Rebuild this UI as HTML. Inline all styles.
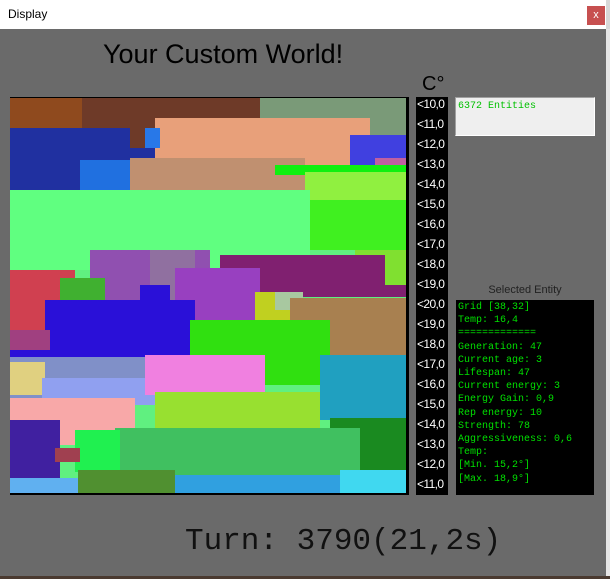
<!DOCTYPE html>
<html><head><meta charset="utf-8"><style>
*{margin:0;padding:0;box-sizing:border-box}
body{width:610px;height:579px;overflow:hidden;background:#d8d8d8;position:relative;font-family:"Liberation Sans",sans-serif}
.abs{position:absolute}
#title{left:0;top:0;width:606px;height:29px;background:#fff}
#body{left:0;top:29px;width:606px;height:547px;background:#6a6a6a}
#bottom{left:0;top:576px;width:610px;height:3px;background:#4a3a30}
.t{position:absolute;left:417px;color:#fff;font-size:12px;letter-spacing:-0.6px;line-height:14px}
.g{font-family:"Liberation Mono",monospace;font-size:10px;color:#00e000;line-height:13.2px;white-space:pre}
</style></head><body>
<div class="abs" id="title"><span class="abs" style="left:8px;top:7px;font-size:12px;color:#000">Display</span>
<div class="abs" style="left:587px;top:6px;width:18px;height:19px;background:#c75050;color:#fff;font-size:11px;text-align:center;line-height:18px">x</div></div>
<div class="abs" id="body"></div>
<div class="abs" style="left:606px;top:29px;width:4px;height:547px;background:#e6e6e6"></div>
<div class="abs" id="bottom"></div>
<div class="abs" style="left:103px;top:39px;font-size:27px;color:#000">Your Custom World!</div>
<div class="abs" style="left:422px;top:73px;font-size:20px;color:#000">C°</div>

<svg class="abs" style="left:10px;top:97px" width="399" height="398" viewBox="10 97 399 398">
<rect x="10" y="97" width="399" height="398" fill="#000"/>
<rect x="10" y="98" width="396" height="395" fill="#60f080"/>
<rect x="10" y="98" width="260" height="30" fill="#6e3a28"/>
<rect x="10" y="98" width="72" height="35" fill="#8f4a1e"/>
<rect x="260" y="98" width="146" height="37" fill="#7a9a78"/>
<rect x="155" y="118" width="215" height="47" fill="#e8a07a"/>
<rect x="10" y="128" width="145" height="62" fill="#2030a0"/>
<rect x="130" y="128" width="25" height="20" fill="#6e3a28"/>
<rect x="80" y="160" width="50" height="30" fill="#2070e0"/>
<rect x="145" y="128" width="15" height="20" fill="#2878e8"/>
<rect x="350" y="135" width="56" height="30" fill="#4040e0"/>
<rect x="130" y="158" width="175" height="45" fill="#c09070"/>
<rect x="375" y="158" width="31" height="10" fill="#c060a0"/>
<rect x="275" y="165" width="131" height="10" fill="#10f010"/>
<rect x="305" y="172" width="101" height="40" fill="#90f040"/>
<rect x="300" y="200" width="106" height="50" fill="#40f020"/>
<rect x="10" y="190" width="300" height="80" fill="#60ff80"/>
<rect x="355" y="250" width="51" height="35" fill="#80e030"/>
<rect x="220" y="255" width="165" height="42" fill="#802070"/>
<rect x="385" y="285" width="21" height="12" fill="#802070"/>
<rect x="90" y="250" width="120" height="60" fill="#9050b0"/>
<rect x="150" y="250" width="45" height="80" fill="#9070a0"/>
<rect x="10" y="270" width="65" height="60" fill="#d04050"/>
<rect x="60" y="278" width="45" height="32" fill="#40b030"/>
<rect x="175" y="268" width="85" height="52" fill="#9840c0"/>
<rect x="140" y="285" width="30" height="45" fill="#2a10d8"/>
<rect x="45" y="300" width="150" height="60" fill="#2a10d8"/>
<rect x="10" y="330" width="60" height="28" fill="#2a10d8"/>
<rect x="10" y="330" width="40" height="20" fill="#a04080"/>
<rect x="255" y="292" width="35" height="28" fill="#c0d020"/>
<rect x="275" y="292" width="28" height="18" fill="#a8c8a0"/>
<rect x="290" y="298" width="116" height="57" fill="#a88050"/>
<rect x="190" y="320" width="140" height="65" fill="#30e010"/>
<rect x="320" y="355" width="86" height="65" fill="#20a0c0"/>
<rect x="10" y="357" width="150" height="48" fill="#8090c8"/>
<rect x="10" y="362" width="35" height="33" fill="#e0d080"/>
<rect x="42" y="378" width="118" height="27" fill="#90a0f0"/>
<rect x="145" y="355" width="120" height="40" fill="#f080e0"/>
<rect x="155" y="392" width="165" height="40" fill="#98e030"/>
<rect x="10" y="398" width="125" height="47" fill="#f8a8a8"/>
<rect x="330" y="418" width="76" height="52" fill="#1a8a20"/>
<rect x="115" y="428" width="245" height="50" fill="#40c060"/>
<rect x="10" y="420" width="50" height="60" fill="#4020a0"/>
<rect x="75" y="430" width="45" height="42" fill="#20f050"/>
<rect x="55" y="448" width="25" height="14" fill="#a04050"/>
<rect x="10" y="478" width="70" height="15" fill="#60b0f0"/>
<rect x="78" y="470" width="97" height="23" fill="#509030"/>
<rect x="175" y="475" width="165" height="18" fill="#30a0e0"/>
<rect x="340" y="470" width="66" height="23" fill="#40d8f0"/>
</svg>

<div class="abs" style="left:416px;top:97px;width:32px;height:398px;background:#000"></div>
<div class="t" style="top:97px">&lt;10,0</div>
<div class="t" style="top:117px">&lt;11,0</div>
<div class="t" style="top:137px">&lt;12,0</div>
<div class="t" style="top:157px">&lt;13,0</div>
<div class="t" style="top:177px">&lt;14,0</div>
<div class="t" style="top:197px">&lt;15,0</div>
<div class="t" style="top:217px">&lt;16,0</div>
<div class="t" style="top:237px">&lt;17,0</div>
<div class="t" style="top:257px">&lt;18,0</div>
<div class="t" style="top:277px">&lt;19,0</div>
<div class="t" style="top:297px">&lt;20,0</div>
<div class="t" style="top:317px">&lt;19,0</div>
<div class="t" style="top:337px">&lt;18,0</div>
<div class="t" style="top:357px">&lt;17,0</div>
<div class="t" style="top:377px">&lt;16,0</div>
<div class="t" style="top:397px">&lt;15,0</div>
<div class="t" style="top:417px">&lt;14,0</div>
<div class="t" style="top:437px">&lt;13,0</div>
<div class="t" style="top:457px">&lt;12,0</div>
<div class="t" style="top:477px">&lt;11,0</div>

<div class="abs g" style="left:455px;top:97px;width:140px;height:39px;background:#efefef;border:1px solid #fff;border-top-color:#a0a0a0;border-left-color:#a0a0a0;padding:2px 2px;color:#00c000">6372 Entities</div>
<div class="abs" style="left:456px;top:284px;width:138px;text-align:center;font-size:11px;color:#222">Selected Entity</div>
<div class="abs g" style="left:456px;top:300px;width:138px;height:195px;background:#000;padding:1px 2px">Grid [38,32]
Temp: 16,4
=============
Generation: 47
Current age: 3
Lifespan: 47
Current energy: 3
Energy Gain: 0,9
Rep energy: 10
Strength: 78
Aggressiveness: 0,6
Temp:
[Min. 15,2°]
[Max. 18,9°]</div>

<div class="abs" style="left:185px;top:524px;font-family:'Liberation Mono',monospace;font-size:31px;color:#111;white-space:pre">Turn: 3790(21,2s)</div>
</body></html>
